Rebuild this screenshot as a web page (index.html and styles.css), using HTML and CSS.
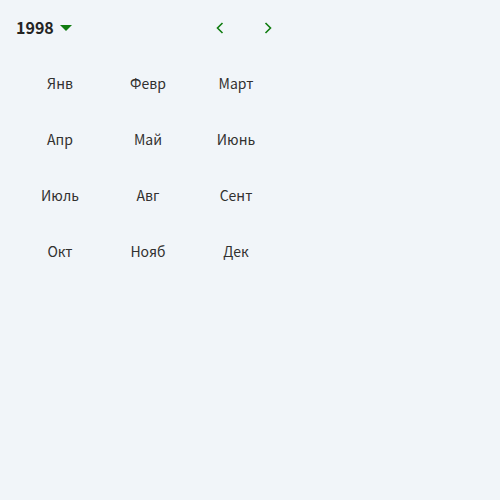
FILE: index.html
```html
<!DOCTYPE html>
<html>
<head>
<meta charset="utf-8">
<link rel="stylesheet" href="styles.css">
</head>
<body>
<div class="picker">
  <div class="header">
    <button class="year"><span class="year-text">1998</span><span class="caret"></span></button>
    <div class="nav">
      <button class="arrow" aria-label="Предыдущий год">
        <svg width="8" height="12" viewBox="0 0 8 12"><path d="M6.5 1 L1.5 6 L6.5 11" fill="none" stroke="#107c10" stroke-width="1.6"/></svg>
      </button>
      <button class="arrow" aria-label="Следующий год">
        <svg width="8" height="12" viewBox="0 0 8 12"><path d="M1.5 1 L6.5 6 L1.5 11" fill="none" stroke="#107c10" stroke-width="1.6"/></svg>
      </button>
    </div>
  </div>
  <div class="grid">
    <button class="month">Янв</button>
    <button class="month">Февр</button>
    <button class="month">Март</button>
    <button class="month">Апр</button>
    <button class="month">Май</button>
    <button class="month">Июнь</button>
    <button class="month">Июль</button>
    <button class="month">Авг</button>
    <button class="month">Сент</button>
    <button class="month">Окт</button>
    <button class="month">Нояб</button>
    <button class="month">Дек</button>
  </div>
</div>
</body>
</html>
```
FILE: styles.css
```css
html, body {
  margin: 0;
  background: #f1f5f9;
  height: 100%;
}
body {
  font-family: "Noto Sans CJK SC", sans-serif;
  color: #323130;
}
button {
  font-family: inherit;
  background: none;
  border: 0;
  padding: 0;
  margin: 0;
  color: inherit;
  cursor: pointer;
}
.picker {
  width: 280px;
  padding: 12px 0 0 16px;
}
.header {
  display: flex;
  align-items: center;
  height: 32px;
}
.year {
  display: flex;
  align-items: center;
  gap: 6px;
  font-size: 16px;
  font-weight: bold;
  color: #242424;
  height: 32px;
}
.year-text {
  line-height: 20px;
  padding-bottom: 2px;
}
.caret {
  width: 0;
  height: 0;
  border-left: 6px solid transparent;
  border-right: 6px solid transparent;
  border-top: 6px solid #107c10;
}
.nav {
  margin-left: auto;
  display: flex;
  padding-right: 4px;
}
.arrow {
  width: 48px;
  height: 32px;
  display: flex;
  align-items: center;
  justify-content: center;
}
.grid {
  display: grid;
  grid-template-columns: repeat(3, 88px);
  grid-auto-rows: 56px;
  margin-top: 24px;
}
.month {
  font-size: 14px;
  line-height: 20px;
  height: 32px;
  padding-bottom: 2px;
  display: flex;
  align-items: center;
  justify-content: center;
}
```
